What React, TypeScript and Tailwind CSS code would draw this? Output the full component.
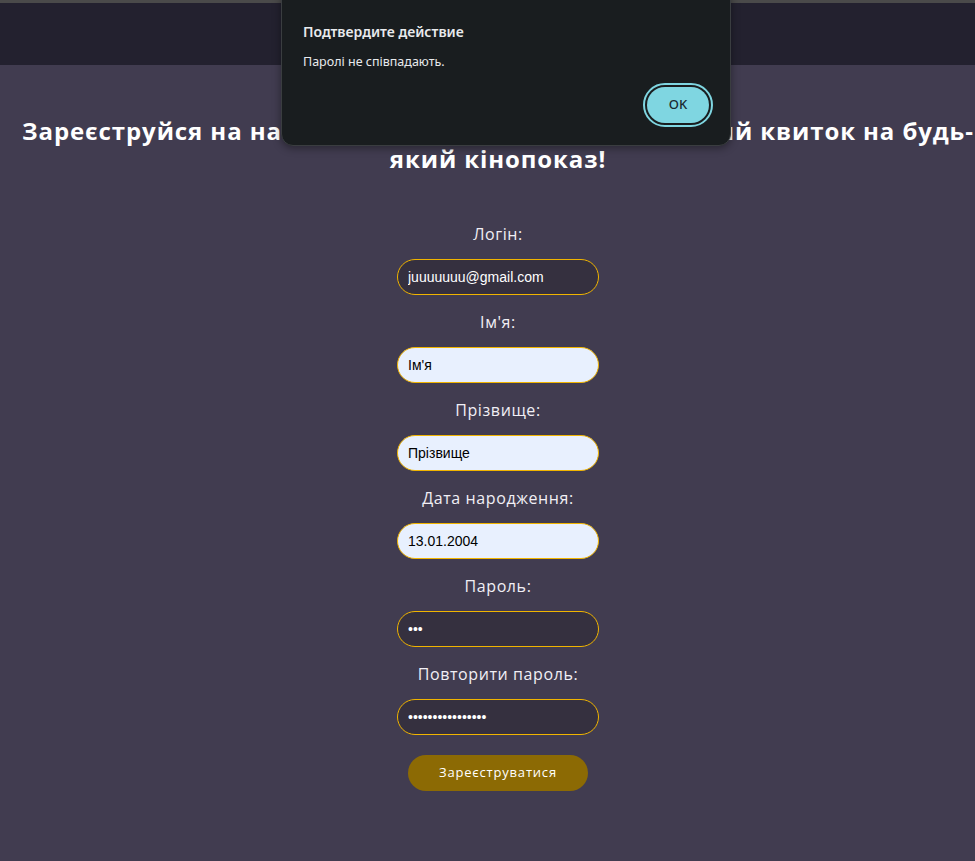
import React from "react";

const labelCls =
  "text-[16px] leading-[20px] text-[#f1eff5] font-['Open_Sans',sans-serif] tracking-[0.6px]";
const inputBase =
  "w-[202px] h-[36px] rounded-full border border-[#f0b400] px-[10px] text-[14px] font-['Liberation_Sans',Arial,sans-serif] outline-none";

function Field({
  label,
  value,
  light,
  type = "text",
}: {
  label: string;
  value: string;
  light?: boolean;
  type?: string;
}) {
  return (
    <div className="flex flex-col items-center">
      <label className={labelCls}>{label}</label>
      <input
        readOnly
        type={type}
        value={value}
        className={
          inputBase +
          " mt-[15px] mb-[17px] " +
          (light ? "bg-[#e8f0fe] text-black" : "bg-[#35303f] text-white")
        }
      />
    </div>
  );
}

export default function App() {
  return (
    <div className="min-h-[861px] bg-[#413c50] relative">
      <div className="h-[65px] bg-[#23212f] border-t-[3px] border-[#4a4a4a]" />
      <main className="flex flex-col items-center pt-[52px] pl-[21px]">
        <h1 className="text-center text-[24px] leading-[28px] font-bold text-white font-['Open_Sans',sans-serif] tracking-[0.9px]">
          Зареєструйся на нашому сайті й отримай безплатний квиток на будь-який кінопоказ!
        </h1>
        <form className="mt-[51px] flex flex-col items-center">
          <Field label="Логін:" value="juuuuuuu@gmail.com" />
          <Field label="Ім'я:" value="Ім'я" light />
          <Field label="Прізвище:" value="Прізвище" light />
          <Field label="Дата народження:" value="13.01.2004" light />
          <Field label="Пароль:" value="aaa" type="password" />
          <Field label="Повторити пароль:" value="aaaaaaaaaaaaaaaa" type="password" />
          <button
            type="button"
            className="mt-[3px] w-[180px] h-[36px] rounded-full bg-[#8c6a04] text-white text-[13px] font-['Open_Sans',sans-serif] tracking-[0.8px]"
          >
            Зареєструватися
          </button>
        </form>
      </main>

      <div className="absolute left-[281px] top-[-12px] w-[450px] h-[158px] bg-[#191d1f] border border-[#3a3d40] rounded-[12px] shadow-[0_2px_8px_rgba(0,0,0,0.4)] font-['Noto_Sans',sans-serif]">
        <div className="pl-[21px] pt-[33px] text-[14px] font-semibold text-[#e8eaed] leading-[20px]">
          Подтвердите действие
        </div>
        <div className="pl-[21px] pt-[11px] text-[12.5px] text-[#e8eaed] leading-[18px]">
          Паролі не співпадають.
        </div>
        <div className="flex justify-end pr-[17px] pt-[12px]">
          <div className="rounded-full border-2 border-[#7fd6e1] p-[2px] bg-[#191d1f]">
            <button className="w-[62px] h-[36px] rounded-full bg-[#7fd6e1] text-[#1a2a30] text-[13px] font-medium">
              OK
            </button>
          </div>
        </div>
      </div>
    </div>
  );
}
